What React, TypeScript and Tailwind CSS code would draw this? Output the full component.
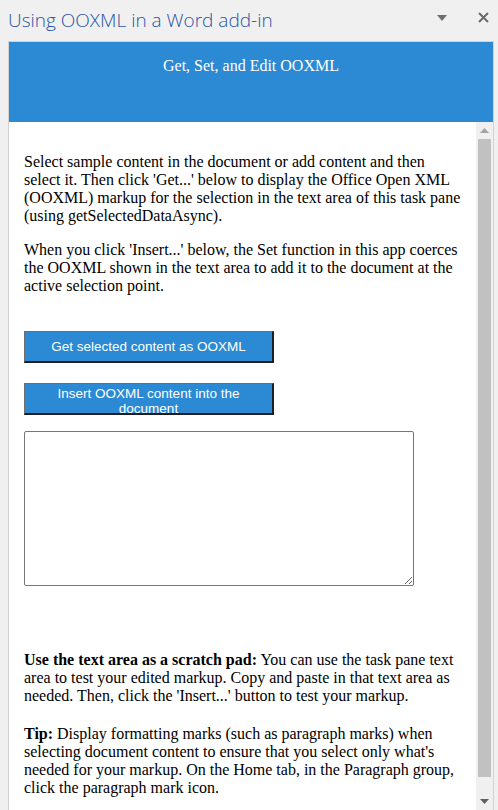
import React from 'react';

const serif = { fontFamily: '"Liberation Serif", "Times New Roman", serif' };
const sans = { fontFamily: '"Liberation Sans", Arial, sans-serif' };

const ScrollArrow: React.FC<{ up?: boolean; color: string }> = ({ up, color }) => (
  <svg width="9" height="5" viewBox="0 0 9 5" className="block">
    {up ? <polygon points="0,5 9,5 4.5,0" fill={color} /> : <polygon points="0,0 9,0 4.5,5" fill={color} />}
  </svg>
);

export default function App() {
  return (
    <div className="w-[498px] h-[810px] bg-[#f0f0f0] overflow-hidden flex flex-col">
      {/* task pane title bar */}
      <div className="h-[41px] shrink-0 flex items-center pl-[8px] pr-[9px]">
        <span
          className="flex-1 text-[19px] text-[#2a54a6] font-light whitespace-nowrap"
          style={{ fontFamily: '"Open Sans", "Noto Sans", sans-serif' }}
        >
          Using OOXML in a Word add-in
        </span>
        <svg width="10" height="6" viewBox="0 0 10 6" className="mr-[31px] mt-[-6px]">
          <polygon points="0,0 10,0 5,6" fill="#707070" />
        </svg>
        <svg width="11" height="11" viewBox="0 0 11 11" className="mt-[-7px]">
          <path d="M1 1 L10 10 M10 1 L1 10" stroke="#6b6b6b" strokeWidth="2" />
        </svg>
      </div>

      {/* pane */}
      <div className="flex-1 ml-[8px] mr-[4px] border border-b-0 border-[#d2d2d2] flex flex-col min-h-0">
        <div className="h-[80px] shrink-0 bg-[#2b8ad3] text-white text-center text-[16px] leading-[18px] pt-[15px]" style={serif}>
          Get, Set, and Edit OOXML
        </div>

        <div className="flex-1 flex min-h-0">
          <div className="flex-1 bg-white overflow-hidden pl-[15px] pt-[31px] text-[16px] leading-[18px] text-black" style={serif}>
            <div className="w-[440px]">
              <p>
                Select sample content in the document or add content and then select it. Then click 'Get...' below to display the Office Open XML (OOXML) markup for the selection in the text area of this task pane (using getSelectedDataAsync).
              </p>
              <p className="mt-[16px]">
                When you click 'Insert...' below, the Set function in this app coerces the OOXML shown in the text area to add it to the document at the active selection point.
              </p>

              <button
                className="mt-[36px] block w-[250px] h-[32px] p-0 bg-[#2b8ad3] text-white text-[13.5px] leading-[15px] border-t border-l border-t-[#6f6f6f] border-l-[#6f6f6f] border-b-2 border-r-2 border-b-[#1f1f1f] border-r-[#1f1f1f]"
                style={sans}
              >
                Get selected content as OOXML
              </button>

              <button
                className="mt-[20px] block w-[250px] h-[32px] p-0 bg-[#2b8ad3] text-white text-[13.5px] leading-[15px] border-t border-l border-t-[#6f6f6f] border-l-[#6f6f6f] border-b-2 border-r-2 border-b-[#1f1f1f] border-r-[#1f1f1f]"
                style={sans}
              >
                <div className="h-[29px] overflow-hidden px-[8px] pt-[2px]">Insert OOXML content into the document</div>
              </button>

              <textarea className="mt-[16px] block w-[390px] h-[155px] border border-[#767676] rounded-[2px] bg-white outline-none" />

              <p className="mt-[65px]">
                <b>Use the text area as a scratch pad:</b> You can use the task pane text area to test your edited markup. Copy and paste in that text area as needed. Then, click the 'Insert...' button to test your markup.
              </p>
              <p className="mt-[20px]">
                <b>Tip:</b> Display formatting marks (such as paragraph marks) when selecting document content to ensure that you select only what's needed for your markup. On the Home tab, in the Paragraph group, click the paragraph mark icon.
              </p>
            </div>
          </div>

          {/* scrollbar */}
          <div className="w-[17px] shrink-0 bg-[#f0f0f0] flex flex-col items-center">
            <div className="h-[17px] flex items-center justify-center">
              <ScrollArrow up color="#a3a3a3" />
            </div>
            <div className="w-[13px] h-[638px] bg-[#c1c1c1]" />
            <div className="flex-1" />
            <div className="h-[17px] flex items-start justify-center pt-[6px]">
              <ScrollArrow color="#606060" />
            </div>
          </div>
        </div>
      </div>
    </div>
  );
}
